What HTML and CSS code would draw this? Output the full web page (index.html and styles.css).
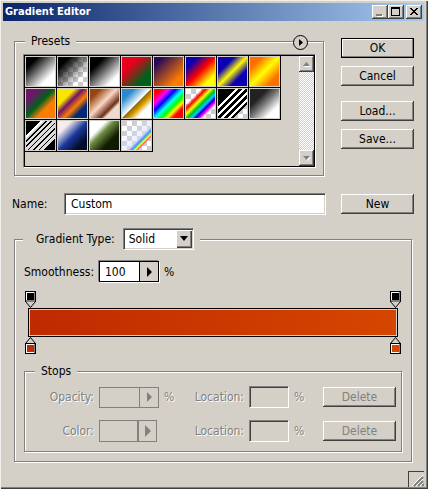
FILE: index.html
```html
<!doctype html>
<html lang="en">
<head>
	<meta charset="utf-8">
	<title>Gradient Editor</title>
	<link rel="stylesheet" href="styles.css">
</head>

<body>
<div class="window">
	<header class="titlebar">
		<h1>Gradient Editor</h1>
		<button class="caption" type="button" aria-label="Minimize" disabled><svg width="14" height="12"><path d="M4 9h6v2H4z" fill="#fff"/><path d="M3 8h6v2H3z" fill="#808080"/></svg></button>
		<button class="caption" type="button" aria-label="Maximize"><svg width="14" height="12"><path d="M2 1h9v9H2zM3 3v6h7V3z" fill="#000" fill-rule="evenodd"/></svg></button>
		<button class="caption close" type="button" aria-label="Close"><svg width="14" height="12" shape-rendering="crispEdges"><path d="M3 2h2v1h1v1h2V3h1V2h2v1h-1v1H9v1H8v1h1v1h1v1h1v1H9V8H8V7H6v1H5v1H3V8h1V7h1V6h1V5H5V4H4V3H3z" fill="#000"/></svg></button>
	</header>

	<form class="content">
		<div class="top">
			<fieldset class="group presets">
				<legend>Presets</legend>
				<button class="flyout" type="button" aria-label="Presets menu"><svg width="17" height="17"><circle cx="8.5" cy="8.5" r="7" fill="#d4d0c8" stroke="#000"/><path d="M7 5v7l4-3.5z"/></svg></button>
				<div class="list">
					<div class="swatches">
						<button type="button" class="swatch g1" aria-label="Foreground to Background"></button>
						<button type="button" class="swatch g2" aria-label="Foreground to Transparent"></button>
						<button type="button" class="swatch g3" aria-label="Black, White"></button>
						<button type="button" class="swatch g4" aria-label="Red, Green"></button>
						<button type="button" class="swatch g5" aria-label="Violet, Orange"></button>
						<button type="button" class="swatch g6" aria-label="Blue, Red, Yellow"></button>
						<button type="button" class="swatch g7" aria-label="Blue, Yellow, Blue"></button>
						<button type="button" class="swatch g8" aria-label="Orange, Yellow, Orange"></button>
						<button type="button" class="swatch g9" aria-label="Violet, Green, Orange"></button>
						<button type="button" class="swatch g10" aria-label="Yellow, Violet, Orange, Blue"></button>
						<button type="button" class="swatch g11" aria-label="Copper"></button>
						<button type="button" class="swatch g12" aria-label="Chrome"></button>
						<button type="button" class="swatch g13" aria-label="Spectrum"></button>
						<button type="button" class="swatch g14" aria-label="Transparent Rainbow"></button>
						<button type="button" class="swatch g15" aria-label="Transparent Stripes"></button>
						<button type="button" class="swatch g16" aria-label="Steel"></button>
						<button type="button" class="swatch g17" aria-label="Grey Stripes"></button>
						<button type="button" class="swatch g18" aria-label="White, Blue, Black"></button>
						<button type="button" class="swatch g19" aria-label="White, Green, Black"></button>
						<button type="button" class="swatch g20" aria-label="Rainbow Edge"></button>
					</div>
					<div class="scrollbar">
						<button type="button" aria-label="Scroll up" disabled><svg width="9" height="6"><path d="M2 6h7L5.500 2z" fill="#fff"/><path d="M1 5h7L4.500 1z" fill="#808080"/></svg></button>
						<button type="button" aria-label="Scroll down" disabled><svg width="9" height="6"><path d="M2 2h7L5.500 6z" fill="#fff"/><path d="M1 1h7L4.500 5z" fill="#808080"/></svg></button>
					</div>
				</div>
			</fieldset>
			<div class="actions">
				<button class="btn default" type="submit">OK</button>
				<button class="btn" type="button">Cancel</button>
				<button class="btn spaced" type="button">Load...</button>
				<button class="btn" type="button">Save...</button>
			</div>
		</div>

		<div class="name-row">
			<label for="name">Name:</label>
			<input class="field" id="name" type="text" value="Custom">
			<button class="btn" type="button">New</button>
		</div>

		<fieldset class="group gradient">
			<legend>
				<label for="type">Gradient Type:</label>
				<span class="dropdown">
					<select id="type"><option>Solid</option></select>
					<svg width="16" height="17"><path d="M4 6h8l-4 5z"/></svg>
				</span>
			</legend>

			<div class="smooth-row">
				<label for="smooth">Smoothness:</label>
				<span class="spin">
					<input id="smooth" type="text" value="100">
					<button type="button" aria-label="Smoothness slider"><svg width="6" height="10"><path d="M1 0v10l5-5z"/></svg></button>
				</span>
				<span>%</span>
			</div>

			<div class="ramp">
				<div class="stops-row">
					<button type="button" class="stop" aria-label="Opacity stop 0%"><svg width="11" height="17"><path d="M.5 10.500L5.500 16.500L10.500 10.500z" fill="#d4d0c8" stroke="#000"/><path d="M0 0h11v11H0z"/><path d="M1 1h9v10H1z" fill="#808080"/><path d="M1 1h8v8H1z" fill="#fff"/><path d="M2 2h7v7H2z"/></svg></button>
					<button type="button" class="stop" aria-label="Opacity stop 100%"><svg width="11" height="17"><path d="M.5 10.500L5.500 16.500L10.500 10.500z" fill="#d4d0c8" stroke="#000"/><path d="M0 0h11v11H0z"/><path d="M1 1h9v10H1z" fill="#808080"/><path d="M1 1h8v8H1z" fill="#fff"/><path d="M2 2h7v7H2z"/></svg></button>
				</div>
				<div class="bar"></div>
				<div class="stops-row">
					<button type="button" class="stop" aria-label="Color stop 0%"><svg width="11" height="17"><path d="M.5 6.500L5.500 .5L10.500 6.500z" fill="#d4d0c8" stroke="#000"/><path d="M0 6h11v11H0z"/><path d="M1 7h9v9H1z" fill="#808080"/><path d="M1 7h8v9H1z" fill="#fff"/><path d="M2 8h7v7H2z" fill="#bf2a00"/></svg></button>
					<button type="button" class="stop" aria-label="Color stop 100%"><svg width="11" height="17"><path d="M.5 6.500L5.500 .5L10.500 6.500z" fill="#d4d0c8" stroke="#000"/><path d="M0 6h11v11H0z"/><path d="M1 7h9v9H1z" fill="#808080"/><path d="M1 7h8v9H1z" fill="#fff"/><path d="M2 8h7v7H2z" fill="#d64600"/></svg></button>
				</div>
			</div>

			<fieldset class="group stops" disabled>
				<legend>Stops</legend>
				<div class="stop-fields">
					<label for="opacity">Opacity:</label>
					<span class="spin">
						<input id="opacity" type="text">
						<button type="button" aria-label="Opacity slider"><svg width="6" height="10"><path d="M1 0v10l5-5z"/></svg></button>
					</span>
					<span>%</span>
					<label for="loc1">Location:</label>
					<input class="field" id="loc1" type="text">
					<span>%</span>
					<button class="btn" type="button">Delete</button>
				</div>
				<div class="stop-fields">
					<label for="color">Color:</label>
					<span class="spin color">
						<input id="color" type="text">
						<button type="button" aria-label="Color menu"><svg width="7" height="12"><path d="M1 0v12l6-6z"/></svg></button>
					</span>
					<span></span>
					<label for="loc2">Location:</label>
					<input class="field" id="loc2" type="text">
					<span>%</span>
					<button class="btn" type="button">Delete</button>
				</div>
			</fieldset>
		</fieldset>
	</form>

	<footer class="status">
		<div class="grip"><svg width="16" height="16"><path d="M6 15l9-9M10 15l5-5M14 15l2-2" stroke="#808080" stroke-width="2"/><path d="M4 15L15 4M8 15l7-7M12 15l3-3" stroke="#fff"/></svg></div>
	</footer>
</div>
</body>
</html>
```
FILE: styles.css
```css
* {box-sizing: border-box;}
body {margin: 0; background: #d4d0c8; color: #000; font: 12px/18px "DejaVu Sans Condensed", "DejaVu Sans", Tahoma, sans-serif;}
button, input, select {font: inherit; color: inherit; margin: 0; padding: 0; border: 0; border-radius: 0; background: none; min-width: 0;}
button {display: flex; align-items: center; justify-content: center;}
svg {display: block;}

.window {
	display: flex; flex-direction: column; min-height: 100vh;
	padding: 3px 4px 2px 3px;
	box-shadow: inset 1px 1px #f1efe9, inset -1px -1px #404040, inset -2px -2px #808080;
}

.titlebar {display: flex; align-items: center; height: 18px; padding: 0 2px; background: linear-gradient(90deg, #0a246a, #a6caf0);}
.titlebar h1 {flex: 1; margin: 0; font-size: 11px; line-height: 18px; font-weight: bold; color: #fff;}
.caption {
	width: 16px; height: 14px; background: #d4d0c8;
	box-shadow: inset -1px -1px #404040, inset 1px 1px #fff, inset -2px -2px #808080;
}
.caption.close {margin-left: 2px;}

.content {flex: 1; padding: 11px 10px 8px 9px;}

/* etched group box, the legend hides the line behind it */
.group {
	position: relative; min-width: 0; margin: 0; padding: 0;
	border: 1px solid #808080;
	box-shadow: 1px 1px #fff, inset 1px 1px #fff;
}
.group > legend {background: #d4d0c8;}

.top {display: flex; gap: 17px; padding: 0 0 0 2px;}
.presets {flex: 1; padding: 4px 7px 7px 8px;}
.presets > legend {margin-left: 2px; padding: 0 6px;}
.flyout {position: absolute; top: -16px; right: 14px;}

.list {
	display: flex; justify-content: space-between; height: 114px;
	border: 1px solid; border-color: #808080 #fff #fff #808080;
	box-shadow: inset 0 0 0 1px #000;
	padding: 1px 1px 1px 1px;
}
.swatches {display: grid; grid-template-columns: repeat(8, 32px); grid-auto-rows: 32px; align-content: start;}
.swatch {
	border: solid #000; border-width: 0 1px 1px 0; padding: 1px;
	background-color: #d4d0c8; background-clip: content-box; background-origin: content-box;
	box-shadow: inset 0 0 0 1px #d4d0c8;
}
.g1 {background-image: linear-gradient(135deg, #000 20%, #fff 75%);}
.g2 {background-image: linear-gradient(135deg, #000 20%, transparent 75%), conic-gradient(#ccc 25%, #fff 0 50%, #ccc 0 75%, #fff 0); background-size: auto, 10px 10px;}
.g3 {background-image: linear-gradient(135deg, #000 25%, #fff 80%);}
.g4 {background-image: linear-gradient(135deg, #e6001b 30%, #00601b 75%);}
.g5 {background-image: linear-gradient(135deg, #290a59 15%, #ff7c00 80%);}
.g6 {background-image: linear-gradient(135deg, #0a00b2 20%, #f00 50%, #ff0 80%);}
.g7 {background-image: linear-gradient(135deg, #0a00b2 28%, #fdf902 50%, #0a00b2 72%);}
.g8 {background-image: linear-gradient(135deg, #ff6e00 20%, #ff0 50%, #ff6e00 80%);}
.g9 {background-image: linear-gradient(135deg, #6f156c 20%, #00601b 48%, #fd7c00 68%);}
.g10 {background-image: linear-gradient(135deg, #f9e600 28%, #6f156c 43%, #fd7c00 60%, #002874 77%);}
.g11 {background-image: linear-gradient(135deg, #974612 18%, #fbd8c5 46%, #6c2e16 68%, #efdbcd 76%);}
.g12 {background-image: linear-gradient(135deg, #2989cc 20%, #fff 49%, #906a00 51%, #d99f00 62%, #fff 76%);}
.g13 {background-image: linear-gradient(135deg, #f00 12%, #f0f 26%, #00f 38%, #0ff 51%, #0f0 63%, #ff0 72%, #f00 82%);}
.g14 {background-image: linear-gradient(135deg, transparent 26%, #f00 34%, #ff0 43%, #00c020 52%, #0cf 60%, #00c 66%, #f0f 73%, transparent 79%), conic-gradient(#ccc 25%, #fff 0 50%, #ccc 0 75%, #fff 0); background-size: auto, 10px 10px;}
.g15 {background-image: linear-gradient(135deg, #000 30%, #fff 0 36%, #000 0 42%, #fff 0 48%, #000 0 54%, #fff 0 60%, #000 0 66%, #fff 0 72%, #000 0 76%, transparent 0), conic-gradient(#fff 25%, #ccc 0 50%, #fff 0 75%, #ccc 0); background-size: auto, 10px 10px;}
.g16 {background-image: linear-gradient(135deg, #222 30%, #777 50%, #fff 78%);}
.g17 {background-image: linear-gradient(135deg, #000 25%, #fff 0 30%, #ccc 0 34%, #000 0 37%, #ddd 0 43%, #000 0 46%, #ddd 0 52%, #000 0 55%, #ddd 0 61%, #000 0 64%, #ddd 0 71%, #000 0 74%, #ddd 0 80%, #000 0);}
.g18 {background-image: linear-gradient(135deg, #f5eded 22%, #1a389b 52%, #050b2a 80%);}
.g19 {background-image: linear-gradient(135deg, #fff 28%, #6d8d43 42%, #101c00 70%);}
.g20 {background-image: linear-gradient(135deg, transparent 20%, #d8e0ff99 60%, #58f 66%, #4d8 69%, #ff4 72%, #f66 76%, transparent 79%), conic-gradient(#fff 25%, #ccc 0 50%, #fff 0 75%, #ccc 0); background-size: auto, 10px 10px;}

.scrollbar {
	display: flex; flex-direction: column; justify-content: space-between; width: 15px;
	background: repeating-conic-gradient(#fff 0 25%, #d4d0c8 0 50%) 0 0 / 2px 2px;
}
.scrollbar button {height: 16px; background: #d4d0c8; box-shadow: inset -1px -1px #404040, inset 1px 1px #fff, inset -2px -2px #808080;}

.actions {display: flex; flex-direction: column; gap: 8px; width: 73px; padding-top: 6px;}
.btn {
	width: 73px; height: 20px; background: #d4d0c8;
	box-shadow: inset -1px -1px #404040, inset 1px 1px #fff, inset -2px -2px #808080;
}
.btn.default {box-shadow: inset 0 0 0 1px #000, inset -2px -2px #808080, inset 2px 2px #fff;}
.btn.spaced {margin-top: 7px;}

.name-row {display: flex; align-items: center; margin-top: 17px;}
.name-row label {width: 52px;}
.name-row .field {flex: 1; margin-right: 15px; padding: 0 6px; background: #fff;}
.field {
	width: 100%; height: 22px;
	border: 1px solid; border-color: #808080 #fff #fff #808080;
	box-shadow: inset 1px 1px #404040, inset -1px -1px #d4d0c8;
}

.gradient {margin: 13px 2px 0 2px; padding: 11px 9px 9px;}
.gradient > legend {display: flex; align-items: center; gap: 8px; padding: 0 6px 0 13px; margin-left: -1px;}
.dropdown {position: relative; display: block; width: 71px; height: 22px;}
.dropdown select {
	appearance: none; width: 100%; height: 100%; padding: 0 5px; background: #fff;
	border: 1px solid; border-color: #808080 #fff #fff #808080;
	box-shadow: inset 1px 1px #404040, inset -1px -1px #d4d0c8;
}
.dropdown svg {
	position: absolute; top: 2px; right: 2px; height: 18px; background: #d4d0c8; pointer-events: none;
	box-shadow: inset 1px 1px #fff, inset -1px -1px #404040, inset -2px -2px #808080;
}

.smooth-row {display: flex; align-items: center; gap: 5px;}
.smooth-row label {width: 70px; text-align: right; white-space: nowrap;}
.spin {display: flex; width: 60px; height: 21px; border: 1px solid #000; box-shadow: -1px -1px #808080, 1px 1px #fff;}
.spin input {flex: 1; width: 0; padding-left: 5px; background: #fff;}
.spin button {width: 19px; border-left: 1px solid #000;}

.ramp {margin: 9px 0 8px;}
.stops-row {display: flex; justify-content: space-between; padding: 0 1px;}
.bar {
	height: 29px; margin: 0 4px; padding: 1px; border: 1px solid #000;
	background: linear-gradient(90deg, #bf2a00, #d64600) content-box;
}

.stops {padding: 6px 5px 9px 0;}
.stops > legend {margin-left: 10px; padding: 0 6px;}
.stop-fields {
	display: grid; grid-template-columns: 69px 60px 12px 1fr 40px 24px 73px; column-gap: 5px; align-items: center;
	color: #808080; text-shadow: 1px 1px #fff;
}
.stop-fields + .stop-fields {margin-top: 12px;}
.stop-fields label {text-align: right; white-space: nowrap;}
.stop-fields .spin {border-color: #808080; box-shadow: none;}
.stop-fields .spin input {background: none;}
.stop-fields .spin button {border-color: #808080;}
.stop-fields .spin path {fill: #808080;}
.stop-fields .spin.color {width: 58px; height: 22px;}
.stop-fields .spin.color button {border-left-width: 2px;}

.status {display: flex; justify-content: flex-end;}
.grip {width: 16px; height: 16px; box-shadow: inset 1px 1px #404040;}
```
